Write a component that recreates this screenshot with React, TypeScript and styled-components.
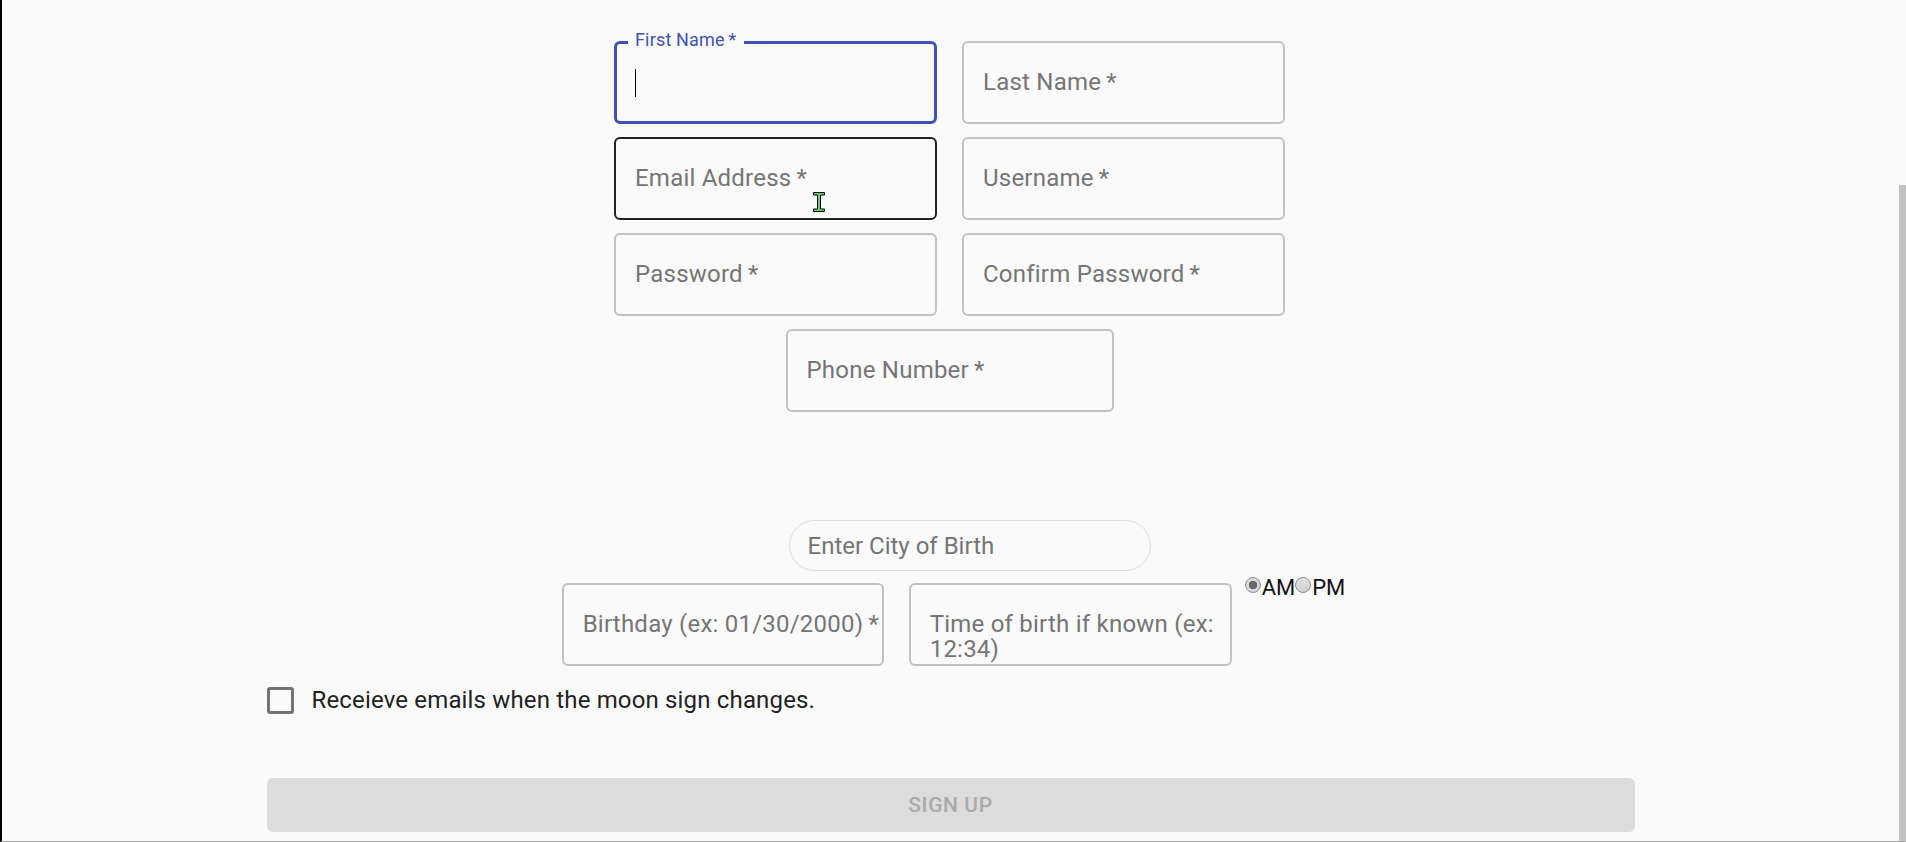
import React from 'react';
import styled, { createGlobalStyle } from 'styled-components';

const GlobalStyle = createGlobalStyle`
  html, body { margin: 0; padding: 0; background: #fafafa; }
  body { font-family: Roboto, "Noto Sans", "Liberation Sans", sans-serif; }
  *, *::before, *::after { box-sizing: border-box; }
`;

type Variant = 'idle' | 'hover' | 'focus';

const borderColor: Record<Variant, string> = {
  idle: '#c1c1c1',
  hover: '#222222',
  focus: '#3f51b5',
};
const borderWidth: Record<Variant, number> = { idle: 2, hover: 2, focus: 3 };

const Frame = styled.div`
  position: relative;
  display: flex;
  height: 842px;
  border-left: 2px solid #000;
  border-bottom: 1px solid #a9a9a9;
  padding-right: 7px;
  overflow: hidden;
  background: #fafafa;
`;

const ScrollThumb = styled.div`
  position: absolute;
  right: 0;
  top: 185px;
  bottom: 0;
  width: 7px;
  background: #c1c1c1;
`;

const Main = styled.main`
  flex: 1;
  display: flex;
  flex-direction: column;
  align-items: center;
  padding-top: 41px;
`;

const FieldGrid = styled.div`
  display: grid;
  grid-template-columns: 323px 323px;
  column-gap: 25px;
  row-gap: 13px;
  margin-right: 2px;
`;

const FieldBox = styled.label<{ $variant: Variant; $width?: number; $span?: boolean }>`
  position: relative;
  display: flex;
  flex-direction: column;
  align-items: flex-start;
  width: ${(p) => p.$width ?? 323}px;
  height: 83px;
  border: ${(p) => borderWidth[p.$variant]}px solid ${(p) => borderColor[p.$variant]};
  border-radius: 6px;
  padding-top: ${(p) => 29 - borderWidth[p.$variant]}px;
  padding-left: ${(p) => 21 - borderWidth[p.$variant]}px;
  cursor: text;
  ${(p) => (p.$span ? 'grid-column: 1 / -1; justify-self: center;' : '')}
`;

const FieldLabel = styled.span`
  font-size: 24px;
  line-height: 25px;
  letter-spacing: 0.225px;
  color: #757575;
  white-space: nowrap;
`;

const FloatLabel = styled.span`
  position: absolute;
  top: -14px;
  left: 11px;
  padding: 0 7px;
  font-size: 18px;
  line-height: 20px;
  letter-spacing: 0.17px;
  color: #3f51b5;
  background: #fafafa;
  white-space: nowrap;
`;

const Caret = styled.span`
  display: block;
  width: 1px;
  height: 28px;
  margin-top: -1px;
  background: #000;
`;

const PointerCursor = styled.svg`
  position: absolute;
  left: 197px;
  top: 53px;
`;

const CityInput = styled.input`
  width: 362px;
  height: 51px;
  margin-top: 108px;
  margin-left: 38px;
  border: 1px solid #dcdcdc;
  border-radius: 26px;
  padding: 0 0 0 18px;
  background: transparent;
  font-family: Roboto, "Noto Sans", sans-serif;
  font-size: 24px;
  color: #222;
  outline: none;
  &::placeholder { color: #757575; }
`;

const BirthRow = styled.div`
  display: flex;
  align-items: flex-start;
  margin-top: 12px;
  margin-left: 6px;
`;

const Spacer = styled.div<{ $w: number }>`
  width: ${(p) => p.$w}px;
  flex: none;
`;

const RadioGroup = styled.div`
  display: flex;
  align-items: center;
  margin-top: -8px;
  height: 26px;
  font-size: 22px;
  line-height: 26px;
  color: #111;
`;

const RadioLabel = styled.label`
  display: flex;
  align-items: center;
`;

const Radio = styled.input`
  appearance: none;
  flex: none;
  width: 16px;
  height: 16px;
  margin: 0 1px 7px 0;
  border: 1px solid #8e8e8e;
  border-radius: 50%;
  background: linear-gradient(#e2e2e2, #cfcfcf);
  &:checked {
    background: radial-gradient(circle, #676767 0 4px, #d8d8d8 4.5px);
  }
`;

const CheckRow = styled.div`
  display: flex;
  align-items: center;
  gap: 18px;
  width: 1368px;
  margin-top: 20px;
`;

const CheckBox = styled.input`
  appearance: none;
  width: 27px;
  height: 27px;
  margin: 0;
  border: 3px solid #737373;
  border-radius: 3px;
  background: transparent;
`;

const CheckText = styled.label`
  font-size: 24px;
  line-height: 28px;
  letter-spacing: 0.16px;
  color: #222;
`;

const SubmitButton = styled.button`
  width: 1368px;
  height: 54px;
  margin-top: 64px;
  border: none;
  border-radius: 6px;
  background: #dcdcdc;
  font-family: Roboto, "Noto Sans", sans-serif;
  font-size: 21px;
  font-weight: 500;
  letter-spacing: 0.6px;
  color: #a9a9a9;
  text-transform: uppercase;
`;

const Field: React.FC<{ label: React.ReactNode; variant?: Variant; width?: number; span?: boolean; children?: React.ReactNode }> = ({
  label,
  variant = 'idle',
  width,
  span,
  children,
}) => (
  <FieldBox $variant={variant} $width={width} $span={span}>
    <FieldLabel>{label}</FieldLabel>
    {children}
  </FieldBox>
);

export default function App() {
  return (
    <>
      <GlobalStyle />
      <Frame>
        <Main>
          <FieldGrid>
            <FieldBox $variant="focus">
              <FloatLabel>First Name&thinsp;*</FloatLabel>
              <Caret />
            </FieldBox>
            <Field label={<>Last Name&thinsp;*</>} />
            <Field label={<>Email Address&thinsp;*</>} variant="hover">
              <PointerCursor width="12" height="20" viewBox="0 0 12 20">
                <path
                  d="M0.5 0.5h11v2.5h-4v14h4v2.5h-11v-2.5h4v-14h-4z"
                  fill="#62d071"
                  stroke="#000"
                  strokeWidth="1"
                />
              </PointerCursor>
            </Field>
            <Field label={<>Username&thinsp;*</>} />
            <Field label={<>Password&thinsp;*</>} />
            <Field label={<>Confirm Password&thinsp;*</>} />
            <Field label={<>Phone Number&thinsp;*</>} width={328} span />
          </FieldGrid>

          <CityInput placeholder="Enter City of Birth" />

          <BirthRow>
            <Field label={<>Birthday (ex: 01/30/2000)&thinsp;*</>} width={322} />
            <Spacer $w={25} />
            <Field
              label={
                <>
                  Time of birth if known (ex:
                  <br />
                  12:34)
                </>
              }
            />
            <Spacer $w={13} />
            <RadioGroup>
              <RadioLabel>
                <Radio type="radio" name="ampm" defaultChecked />
                AM
              </RadioLabel>
              <RadioLabel>
                <Radio type="radio" name="ampm" />
                PM
              </RadioLabel>
            </RadioGroup>
          </BirthRow>

          <CheckRow>
            <CheckBox type="checkbox" id="moon" />
            <CheckText htmlFor="moon">Receieve emails when the moon sign changes.</CheckText>
          </CheckRow>

          <SubmitButton disabled>Sign Up</SubmitButton>
        </Main>
        <ScrollThumb />
      </Frame>
    </>
  );
}
